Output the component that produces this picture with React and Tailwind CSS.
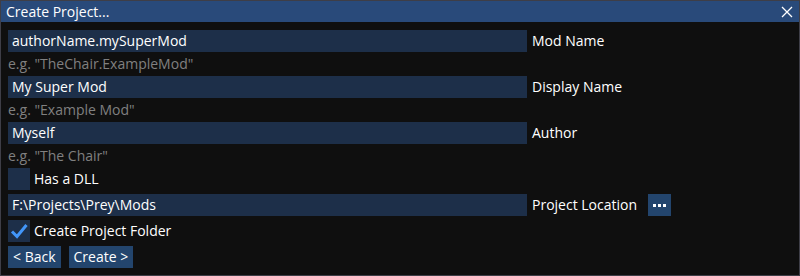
const font = { fontFamily: '"Open Sans", "Noto Sans", sans-serif' };

const Field = ({ value, label, extra }) => (
  <div className="flex items-center h-[22px]">
    <div className="w-[519px] h-[22px] bg-[#1d2f49] px-1 flex items-center text-white text-[14px] leading-none">
      {value}
    </div>
    <span className="ml-[5px] text-white text-[14px] leading-none">{label}</span>
    {extra}
  </div>
);

const Hint = ({ children }) => (
  <div className="h-4 flex items-center text-[#808080] text-[14px] leading-none">{children}</div>
);

const Checkbox = ({ checked, label }) => (
  <div className="flex items-center h-[22px]">
    <div className="w-[22px] h-[22px] bg-[#1d2f49] flex items-center justify-center">
      {checked && (
        <svg width="22" height="22" viewBox="0 0 22 22">
          <polyline points="4,11.5 9,16.5 18.5,5" fill="none" stroke="#4296fa" strokeWidth="3" />
        </svg>
      )}
    </div>
    <span className="ml-[4px] text-white text-[14px] leading-none">{label}</span>
  </div>
);

const Button = ({ children, className = '' }) => (
  <button className={`h-[22px] px-[5px] bg-[#23456d] text-white text-[14px] leading-none flex items-center ${className}`}>
    {children}
  </button>
);

export default function App() {
  return (
    <div className="w-[800px] h-[276px] bg-[#0f0f0f] border border-[#3e3e47] flex flex-col" style={font}>
      {/* Title bar */}
      <div className="h-[21px] bg-[#294a7a] flex items-center justify-between pl-[5px] pr-[6px]">
        <span className="text-white text-[14px] leading-none">Create Project...</span>
        <svg width="12" height="12" viewBox="0 0 12 12">
          <path d="M1 1 L11 11 M11 1 L1 11" stroke="#fff" strokeWidth="1.3" />
        </svg>
      </div>

      <div className="flex flex-col gap-1 pt-2 px-[7px]">
        <Field value="authorName.mySuperMod" label="Mod Name" />
        <Hint>e.g. "TheChair.ExampleMod"</Hint>
        <Field value="My Super Mod" label="Display Name" />
        <Hint>e.g. "Example Mod"</Hint>
        <Field value="Myself" label="Author" />
        <Hint>e.g. "The Chair"</Hint>
        <Checkbox label="Has a DLL" />
        <Field
          value="F:\Projects\Prey\Mods"
          label="Project Location"
          extra={
            <button className="ml-[11px] w-[23px] h-[22px] bg-[#23456d] flex items-center justify-center gap-[2px]">
              <span className="w-[3px] h-[3px] bg-white" />
              <span className="w-[3px] h-[3px] bg-white" />
              <span className="w-[3px] h-[3px] bg-white" />
            </button>
          }
        />
        <Checkbox checked label="Create Project Folder" />
        <div className="flex gap-2">
          <Button>&lt; Back</Button>
          <Button>Create &gt;</Button>
        </div>
      </div>
    </div>
  );
}
